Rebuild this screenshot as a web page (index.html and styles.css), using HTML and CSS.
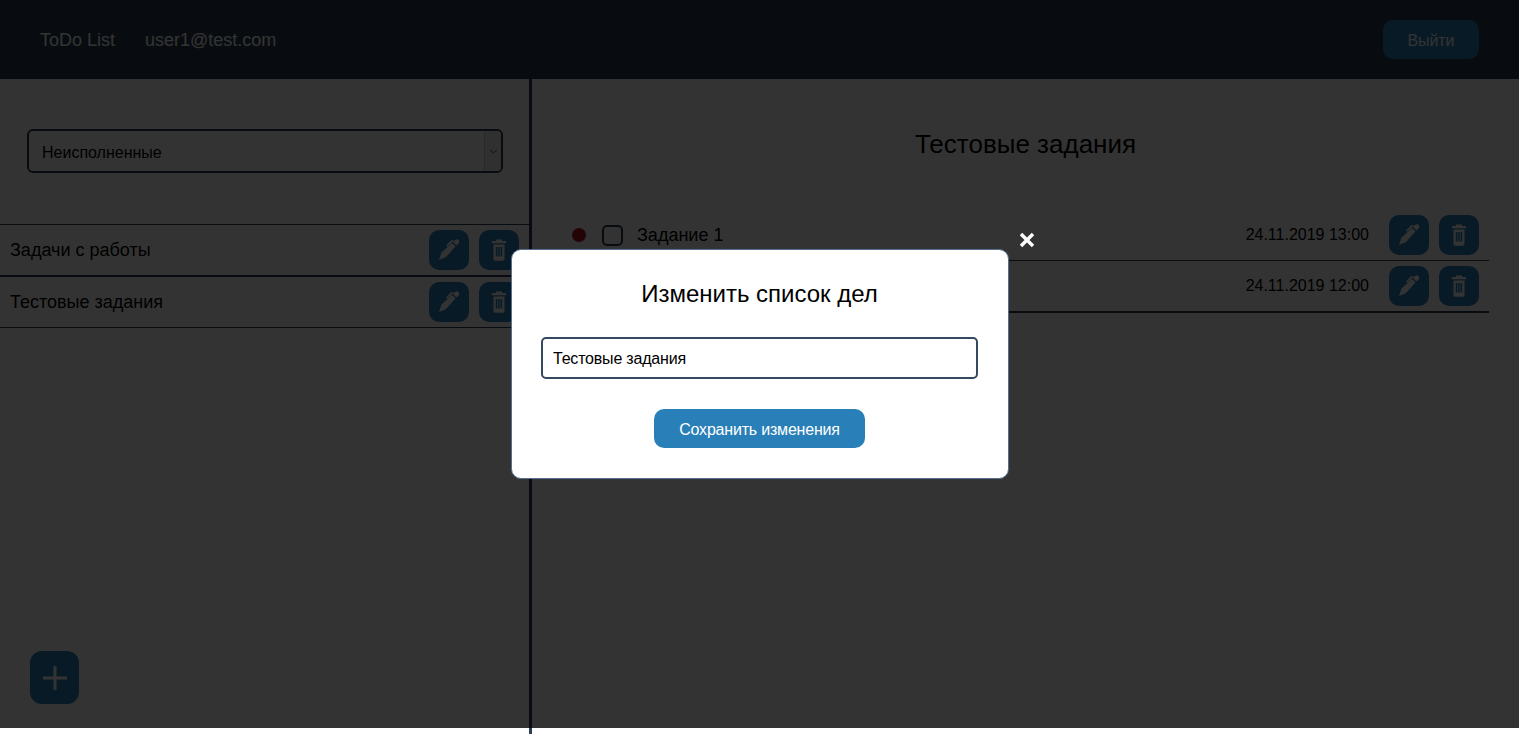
FILE: index.html
```html
<!DOCTYPE html>
<html lang="ru">
<head>
    <meta charset="UTF-8">
    <meta name="viewport" content="width=device-width, initial-scale=1.0">
    <link rel="stylesheet" href="styles.css">
    <title>ToDo List</title>
</head>
<body>
    <svg class="sprite" width="0" height="0">
        <symbol id="pen" viewBox="0 0 40 40">
            <path d="M10 30l2.500-7.500 10.500-9.500 3.500 3.500-9.500 10.500z"/>
            <path d="M24 12l2-2c1-1 2.500-1 3.500 0s1 2.500 0 3.500l-2 2z"/>
            <path d="M17 15.500l5-5 3-.5-1 1.200-5.800 5.500z"/>
        </symbol>
        <symbol id="trash" viewBox="0 0 40 40">
            <path d="M13 11h4v-1.500h6V11h4v2.200H13z"/>
            <path fill-rule="evenodd" d="M14.500 14.500h11V29c0 1-.7 1.700-1.700 1.700h-7.600c-1 0-1.700-.7-1.700-1.700zM16.800 17v9.500h1.600V17zm2.400 0v9.500h1.600V17zm2.400 0v9.500h1.600V17z"/>
        </symbol>
    </svg>

    <header class="topbar">
        <span class="brand">ToDo List</span>
        <span class="user">user1@test.com</span>
        <button class="btn logout">Выйти</button>
    </header>

    <main class="layout">
        <aside class="sidebar">
            <div class="filter">
                <div class="select">
                    <span class="select-text">Неисполненные</span>
                    <span class="select-arrow">
                        <svg width="9" height="5" viewBox="0 0 9 5"><path d="M1 1l3.500 3L8 1" fill="none" stroke="#555" stroke-width="1"/></svg>
                    </span>
                </div>
            </div>
            <ul class="lists">
                <li class="list-row">
                    <span class="row-name">Задачи с работы</span>
                    <button class="btn icon-btn"><svg class="ico"><use href="#pen"/></svg></button>
                    <button class="btn icon-btn"><svg class="ico"><use href="#trash"/></svg></button>
                </li>
                <li class="list-row">
                    <span class="row-name">Тестовые задания</span>
                    <button class="btn icon-btn"><svg class="ico"><use href="#pen"/></svg></button>
                    <button class="btn icon-btn"><svg class="ico"><use href="#trash"/></svg></button>
                </li>
            </ul>
            <button class="btn add-btn">
                <svg width="24" height="24" viewBox="0 0 24 24"><path d="M10.500 0h3v10.500H24v3H13.500V24h-3V13.500H0v-3h10.500z"/></svg>
            </button>
        </aside>

        <section class="content">
            <h1 class="content-title">Тестовые задания</h1>
            <ul class="tasks">
                <li class="task-row">
                    <span class="dot"></span>
                    <span class="check"></span>
                    <span class="task-name">Задание 1</span>
                    <span class="task-date">24.11.2019 13:00</span>
                    <button class="btn icon-btn"><svg class="ico"><use href="#pen"/></svg></button>
                    <button class="btn icon-btn"><svg class="ico"><use href="#trash"/></svg></button>
                </li>
                <li class="task-row">
                    <span class="dot"></span>
                    <span class="check"></span>
                    <span class="task-name">Задание 2</span>
                    <span class="task-date">24.11.2019 12:00</span>
                    <button class="btn icon-btn"><svg class="ico"><use href="#pen"/></svg></button>
                    <button class="btn icon-btn"><svg class="ico"><use href="#trash"/></svg></button>
                </li>
            </ul>
        </section>
    </main>

    <div class="overlay">
        <div class="modal">
            <svg class="modal-close" width="16" height="16" viewBox="0 0 16 16"><path d="M2 2l12 12M14 2L2 14" fill="none" stroke="#fff" stroke-width="3.400"/></svg>
            <h2 class="modal-title">Изменить список дел</h2>
            <input class="modal-input" type="text" value="Тестовые задания">
            <button class="btn save-btn">Сохранить изменения</button>
        </div>
    </div>
</body>
</html>
```

FILE: styles.css
```css
*{
    box-sizing: border-box;
}

html, body{
    height: 100%;
}

body{
    margin: 0;
    overflow: hidden;
    background: #fff;
    color: #000;
    font-family: "Liberation Sans", Arial, sans-serif;
}

.sprite{
    display: none;
}

ul{
    margin: 0;
    padding: 0;
    list-style: none;
}

.btn{
    border: none;
    border-radius: 10px;
    padding: 0;
    background: #2980b9;
    color: #fff;
    font-family: "Liberation Sans", Arial, sans-serif;
    fill: #fff;
}

/* top bar */
.topbar{
    height: 79px;
    padding: 0 40px;
    display: flex;
    align-items: center;
    background: #2c3e50;
    color: #fff;
    font-size: 18px;
}

.brand, .user{
    padding-top: 2px;
}

.user{
    margin-left: 30px;
}

.logout{
    width: 96px;
    height: 39px;
    margin-left: auto;
    padding-top: 2px;
    font-size: 16px;
    letter-spacing: -0.1px;
}

/* two columns */
.layout{
    display: flex;
    height: 655px;
}

.sidebar{
    position: relative;
    width: 532px;
    flex: none;
    border-right: 3px solid #2c3e50;
}

.filter{
    padding: 50px 26px 51px 27px;
}

.select{
    height: 44px;
    display: flex;
    align-items: center;
    justify-content: space-between;
    border: 2px solid #2c3e50;
    border-radius: 6px;
    font-size: 16px;
    padding-left: 13px;
}

.select-text{
    padding-top: 3px;
}

.select-arrow{
    width: 17px;
    height: 40px;
    display: flex;
    align-items: center;
    justify-content: center;
    background: #f0f0f0;
    border-left: 1px solid #ccc;
    border-radius: 0 4px 4px 0;
}

.list-row{
    height: 52px;
    padding: 5px 10px;
    display: flex;
    align-items: center;
    gap: 10px;
    border-top: 1px solid #2c3e50;
    border-bottom: 1px solid #2c3e50;
    font-size: 18px;
}

.row-name{
    flex: 1;
}

.icon-btn{
    width: 40px;
    height: 40px;
    flex: none;
    display: flex;
    align-items: center;
    justify-content: center;
}

.ico{
    width: 40px;
    height: 40px;
}

.add-btn{
    position: absolute;
    left: 30px;
    bottom: 30px;
    width: 49px;
    height: 53px;
    display: flex;
    align-items: center;
    justify-content: center;
    border-radius: 12px;
}

/* right column */
.content{
    flex: 1;
}

.content-title{
    margin: 50px 0 51px;
    text-align: center;
    font-size: 26px;
    font-weight: 400;
    line-height: 30px;
}

.tasks{
    padding-right: 30px;
}

.task-row{
    height: 51px;
    padding: 5px 10px 5px 40px;
    display: flex;
    align-items: center;
    gap: 10px;
    border-bottom: 1px solid #2c3e50;
    font-size: 18px;
}

.task-row:last-child{
    height: 52px;
    border-bottom-width: 2px;
}

.dot{
    width: 14px;
    height: 14px;
    margin-right: 6px;
    border-radius: 50%;
    background: #b01020;
}

.check{
    width: 21px;
    height: 21px;
    margin-right: 4px;
    border: 2px solid #2c3e50;
    border-radius: 5px;
}

.task-name{
    flex: 1;
}

.task-date{
    margin-right: 10px;
    font-size: 16px;
}

/* modal */
.overlay{
    position: fixed;
    left: 0;
    top: 0;
    width: 100%;
    height: 728px;
    display: flex;
    justify-content: center;
    background: rgba(0, 0, 0, .8);
}

.modal{
    position: relative;
    width: 498px;
    height: 230px;
    margin-top: 249px;
    padding: 30px 30px 0;
    display: flex;
    flex-direction: column;
    align-items: center;
    background: #fff;
    border: 1px solid #56708f;
    border-radius: 10px;
}

.modal-close{
    position: absolute;
    top: -18px;
    right: -27.5px;
}

.modal-title{
    margin: 0 0 29px;
    font-size: 24px;
    font-weight: 400;
    line-height: 28px;
}

.modal-input{
    width: 437px;
    height: 42px;
    padding: 2px 10px 0;
    border: 2px solid #34495e;
    border-radius: 5px;
    font-family: "Liberation Sans", Arial, sans-serif;
    font-size: 16px;
    letter-spacing: -0.2px;
    color: #000;
    outline: none;
}

.save-btn{
    width: 211px;
    height: 39px;
    margin-top: 30px;
    padding-top: 2px;
    font-size: 16px;
    letter-spacing: -0.2px;
}
```
